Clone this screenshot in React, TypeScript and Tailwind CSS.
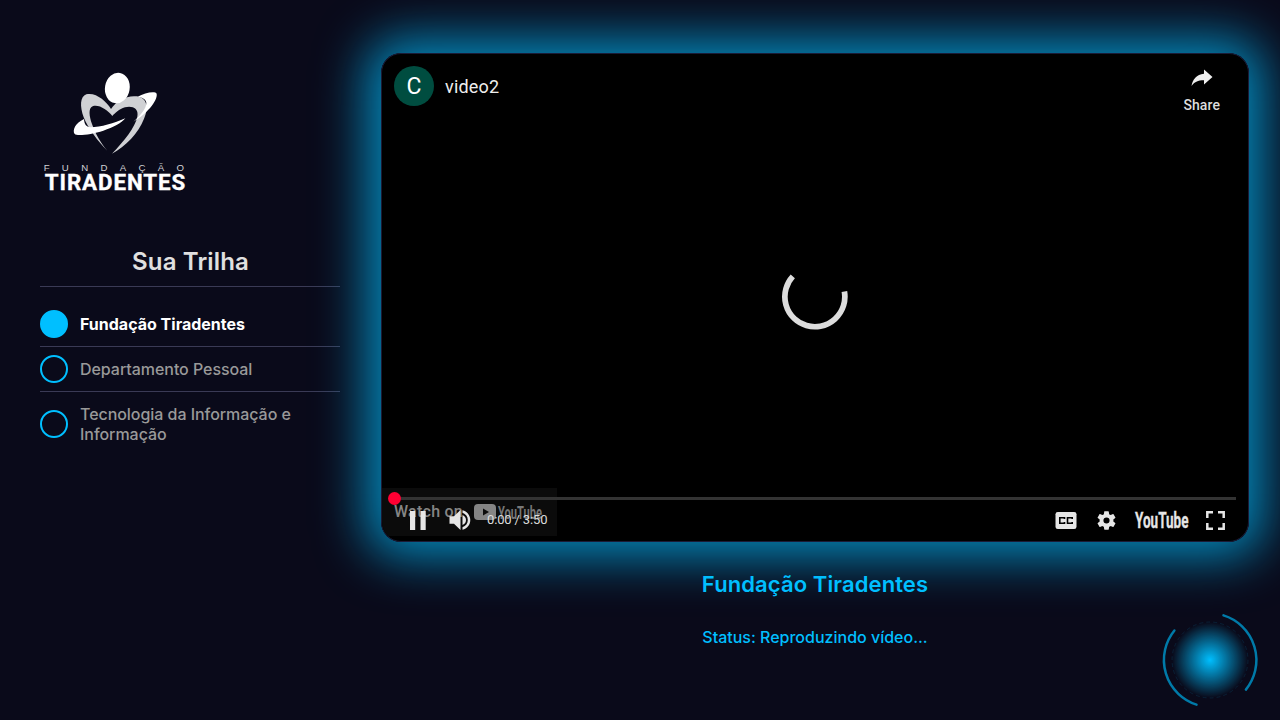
import React from "react";

const steps = [
  { label: "Fundação Tiradentes", active: true, row: "h-[45px] border-b border-[#3a3a55]" },
  { label: "Departamento Pessoal", active: false, row: "h-[45px] border-b border-[#3a3a55]" },
  { label: "Tecnologia da Informação e Informação", active: false, row: "h-[64px]" },
];

function Logo() {
  return (
    <svg className="block h-[140px] w-[170px]" viewBox="0 0 510 420">
      <path
        fill="#d0d1d4"
        d="M232 272C204 245 174 204 161 172C149 139 150 110 169 103C197 96 229 123 243 147C258 122 291 105 321 109C352 114 357 145 342 176C326 218 286 260 246 281C282 243 316 201 322 170C327 144 306 137 285 142C267 147 255 160 247 168C233 150 206 132 188 139C174 145 178 170 186 192C196 222 214 251 232 272Z"
      />
      <ellipse cx="262" cy="84" rx="37" ry="46" fill="#fff" transform="rotate(10 262 84)" />
      <path
        fill="#fff"
        d="M162 177C136 189 126 211 134 222C142 229 185 223 220 212C250 202 274 190 286 175C252 189 213 202 181 202C168 200 163 193 162 177Z"
      />
      <path
        fill="#fff"
        d="M323 110C343 99 375 92 380 101C384 123 347 164 310 185C328 170 350 145 349 128C348 118 337 112 323 110Z"
      />
      <text x="41" y="333" fontFamily="Liberation Sans" fontSize="29" fill="#d2d2d6" textLength="421">
        FUNDAÇÃO
      </text>
      <text
        x="44"
        y="391"
        fontFamily="Roboto"
        fontWeight="700"
        fontSize="67"
        fill="#fff"
        stroke="#fff"
        strokeWidth="1"
        textLength="422"
        lengthAdjust="spacing"
      >
        TIRADENTES
      </text>
    </svg>
  );
}

function Sidebar() {
  return (
    <aside className="flex w-[350px] shrink-0 flex-col pt-[60px]">
      <div className="pl-[30px]">
        <Logo />
      </div>
      <div className="ml-10 w-[300px]">
        <h2 className="mt-[43px] h-[44px] border-b border-[#3a3a55] pl-px text-center text-2xl leading-[38px] font-semibold tracking-[0.15px] text-[#e0e0e0]">
          Sua Trilha
        </h2>
        <ul className="pt-[15px]">
          {steps.map((s) => (
            <li key={s.label} className={"flex items-center gap-3 " + s.row}>
              <span
                className={
                  "h-7 w-7 shrink-0 rounded-full border-2 border-[#00bfff] " + (s.active ? "bg-[#00bfff]" : "")
                }
              />
              <span
                className={
                  "text-base leading-5 " +
                  (s.active ? "font-bold text-white" : "font-medium tracking-[-0.05px] text-[#999]")
                }
              >
                {s.label}
              </span>
            </li>
          ))}
        </ul>
      </div>
    </aside>
  );
}

function Player() {
  return (
    <div className="relative flex h-[489px] w-[868px] flex-col overflow-hidden rounded-[20px] border border-[#1b1b36] bg-black font-['Roboto',sans-serif]">
      <div className="flex h-[70px] shrink-0 justify-between pt-3 pr-7 pl-3">
        <div className="flex h-10 items-center gap-[11px]">
          <span className="flex h-10 w-10 items-center justify-center rounded-full bg-[#004d40] pt-[2px] text-[23px] text-white">
            C
          </span>
          <span className="pt-[2px] text-lg tracking-[0.2px] text-[#eee]">video2</span>
        </div>
        <div className="flex flex-col items-center">
          <svg className="mt-[3px] block h-[18px] w-[22px]" viewBox="0 0 22 18">
            <path fill="#eee" d="M13 0.5L21.5 8L13 15.5V11.2C7 11.2 3 13.2 0.5 17C1.5 10.5 5.5 5.5 13 4.7Z" />
          </svg>
          <span className="mt-[8px] text-sm leading-5 font-medium tracking-[0.1px] text-[#ddd]">Share</span>
        </div>
      </div>

      <div className="flex flex-1 items-start justify-center pt-[140px]">
        <svg className="block h-[68px] w-[68px]" viewBox="0 0 68 68">
          <path d="M11.8 12.4A30 30 0 1 0 63.4 27.5" fill="none" stroke="#ddd" strokeWidth="5.7" />
        </svg>
      </div>

      <div className="absolute bottom-[5px] left-0 flex h-[48px] w-[175px] items-center bg-[#0b0b0b] pl-3">
        <span className="text-base font-medium tracking-[0.25px] text-[#858585]">Watch on</span>
        <svg className="ml-[11px] block h-[18px] w-[70px] overflow-visible" viewBox="0 0 70 18">
          <rect x="0" y="1" width="22" height="16" rx="4" fill="#858585" />
          <path d="M9 5.5L15 9L9 12.5Z" fill="#0b0b0b" />
          <text
            x="24"
            y="15.5"
            fontFamily="Roboto"
            fontWeight="700"
            fontSize="18"
            fill="#777"
            textLength="44"
            lengthAdjust="spacingAndGlyphs"
          >
            YouTube
          </text>
        </svg>
      </div>

      <div className="relative flex h-[49px] shrink-0 flex-col px-3">
        <div className="flex h-[13px] items-center">
          <span className="z-10 h-[13px] w-[13px] -translate-x-[6px] rounded-full bg-[#ff0033]" />
          <span className="-ml-[13px] h-[3px] flex-1 bg-[#333]" />
        </div>
        <div className="flex h-[30px] items-center justify-between text-[#e6e6e6]">
          <div className="flex items-center">
            <svg className="ml-[16px] block h-[19px] w-[16px]" viewBox="0 0 16 19" fill="currentColor">
              <path d="M0 0H5.2V19H0ZM10.5 0H15.7V19H10.5Z" />
            </svg>
            <svg className="ml-[23px] block h-[22px] w-[22px]" viewBox="0 0 22 22" fill="currentColor">
              <path d="M0.5 7.3H5L11.5 1V21L5 14.7H0.5ZM13.5 6C16 7 17 9 17 11S16 15 13.5 16ZM13.5 1.2C18 2.3 21.3 6.2 21.3 11S18 19.7 13.5 20.8V18.3C16.8 17 18.8 14.5 18.8 11S16.8 5 13.5 3.7Z" />
            </svg>
            <span className="ml-[16px] text-[13px] tracking-[-0.15px] text-[#ddd]">0:00 / 3:50</span>
          </div>
          <div className="flex items-center pr-[11px]">
            <svg className="block h-[17px] w-[22px]" viewBox="0 0 22 17">
              <rect x="0.5" y="0" width="21" height="17" rx="2.3" fill="currentColor" />
              <path
                d="M9.5 7V5.8H4.8V11.2H9.5V10M17.2 7V5.8H12.5V11.2H17.2V10"
                fill="none"
                stroke="#000"
                strokeWidth="1.6"
              />
            </svg>
            <svg className="ml-[18px] block h-[23px] w-[23px]" viewBox="0 0 24 24" fill="currentColor">
              <path d="M19.14 12.94c.04-.3.06-.61.06-.94 0-.32-.02-.64-.07-.94l2.03-1.58a.49.49 0 0 0 .12-.61l-1.92-3.32a.488.488 0 0 0-.59-.22l-2.39.96c-.5-.38-1.03-.7-1.62-.94l-.36-2.54a.484.484 0 0 0-.48-.41h-3.84c-.24 0-.43.17-.47.41l-.36 2.54c-.59.24-1.13.57-1.62.94l-2.39-.96c-.22-.08-.47 0-.59.22L2.74 8.87c-.12.21-.08.47.12.61l2.03 1.58c-.05.3-.09.63-.09.94s.02.64.07.94l-2.03 1.58a.49.49 0 0 0-.12.61l1.92 3.32c.12.22.37.29.59.22l2.39-.96c.5.38 1.03.7 1.62.94l.36 2.54c.05.24.24.41.48.41h3.84c.24 0 .44-.17.47-.41l.36-2.54c.59-.24 1.13-.56 1.62-.94l2.39.96c.22.08.47 0 .59-.22l1.92-3.32c.12-.22.07-.47-.12-.61l-2.01-1.58zM12 15.2A3.2 3.2 0 1 1 12 8.8a3.2 3.2 0 0 1 0 6.4z" />
            </svg>
            <svg className="ml-[17px] block h-[20px] w-[54px] overflow-visible" viewBox="0 0 54 20">
              <text
                x="0"
                y="18"
                fontFamily="Roboto"
                fontWeight="700"
                fontSize="22.5"
                fill="currentColor"
                stroke="currentColor"
                strokeWidth="0.3"
                textLength="53.5"
                lengthAdjust="spacingAndGlyphs"
              >
                YouTube
              </text>
            </svg>
            <svg className="ml-[17px] block h-[19px] w-[19px]" viewBox="0 0 19 19" fill="none" stroke="currentColor" strokeWidth="2.5">
              <path d="M1.3 7V1.3H7M12 1.3H17.7V7M17.7 12V17.7H12M7 17.7H1.3V12" />
            </svg>
          </div>
        </div>
      </div>
    </div>
  );
}

function Orb() {
  return (
    <svg className="fixed right-[10px] bottom-0 block h-[120px] w-[120px]" viewBox="0 0 120 120">
      <defs>
        <radialGradient id="orb">
          <stop offset="0" stopColor="#00bfff" />
          <stop offset="1" stopColor="#00bfff" stopOpacity="0" />
        </radialGradient>
      </defs>
      <circle cx="60" cy="60" r="38" fill="url(#orb)" />
      <circle cx="60" cy="60" r="38" fill="none" stroke="#00bfff" strokeOpacity="0.2" strokeWidth="0.6" strokeDasharray="4 3" />
      <g fill="none" stroke="#007aa8" strokeWidth="2.5" strokeLinecap="round">
        <path d="M24.4 30.5A46.8 46.8 0 0 0 46.5 104.6" />
        <path d="M73.5 15.4A46.8 46.8 0 0 1 95.9 89.6" />
      </g>
    </svg>
  );
}

export default function App() {
  return (
    <div className="flex h-[720px] w-full overflow-hidden bg-[#0a0a1a] font-['Inter',sans-serif]">
      <Sidebar />
      <main className="flex flex-1 flex-col items-center pt-[53px]">
        <div className="rounded-[20px] shadow-[0_0_50px_15px_rgba(0,191,255,0.7)]">
          <Player />
        </div>
        <h1 className="mt-[26px] text-[22px] leading-8 font-semibold tracking-[0.1px] text-[#00bfff]">
          Fundação Tiradentes
        </h1>
        <p className="mt-[25px] text-base leading-6 font-medium text-[#00bfff]">Status: Reproduzindo vídeo...</p>
      </main>
      <Orb />
    </div>
  );
}
